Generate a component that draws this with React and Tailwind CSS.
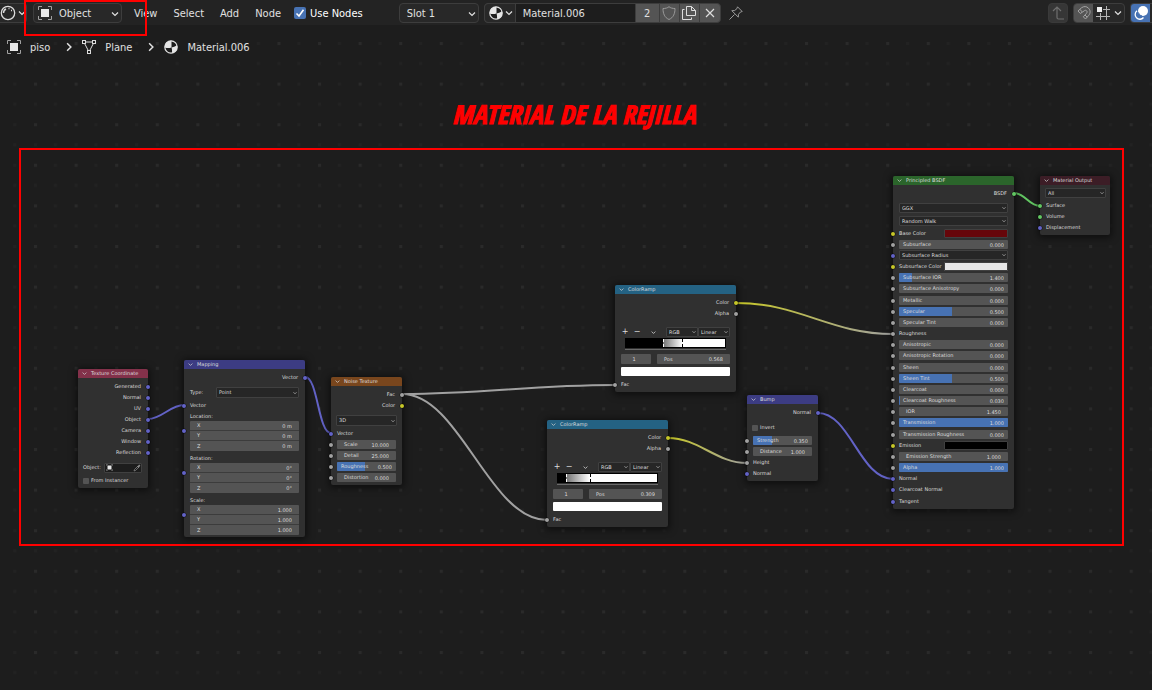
import { useId, useState } from 'react';

const SOCKET = {
    gray: 'bg-[#a1a1a1]',
    yellow: 'bg-[#c7c729]',
    blue: 'bg-[#6363c7]',
    green: 'bg-[#63c763]',
};

/* ---------- icons ---------- */

function Chevron({ className }) {
    return (
        <svg viewBox="0 0 8 8" className={className} fill="none" stroke="currentColor" strokeWidth="1.2">
            <path d="M1 2.5 4 5.5 7 2.5" />
        </svg>
    );
}

function ObjectIcon({ className }) {
    return (
        <svg viewBox="0 0 14 14" className={className} fill="none">
            <path d="M.5 4V.5H4M10 .5h3.500V4M13.500 10v3.500H10M4 13.500H.5V10" stroke="#a0a0a0" />
            <rect x="3" y="3" width="8" height="8" fill="#e8e8e8" />
        </svg>
    );
}

function MaterialIcon({ className }) {
    return (
        <svg viewBox="0 0 14 14" className={className}>
            <circle cx="7" cy="7" r="6.200" fill="#1d1d1d" stroke="#e5e5e5" strokeWidth="1.200" />
            <path d="M7.500 .8A6.200 6.200 0 0 0 .8 7.500C3 8.300 5 8.300 7.500 7.500Z" fill="#e5e5e5" />
            <path d="M7.500 7.500C10 7 12 6 12.900 5A6.200 6.200 0 0 1 8 13.200C8.200 11 8 9 7.500 7.500Z" fill="#e5e5e5" />
        </svg>
    );
}

function SphereIcon({ className }) {
    return (
        <svg viewBox="0 0 16 16" className={className} fill="none" stroke="#dcdcdc">
            <circle cx="8" cy="8" r="6.700" strokeWidth="1.300" />
            <path d="M3.500 8A4.500 4.500 0 0 1 6 4" strokeWidth="1.500" />
            <path d="M8.500 3.500h1M11 5.500h1" strokeWidth="1.300" />
        </svg>
    );
}

function MeshIcon({ className }) {
    return (
        <svg viewBox="0 0 14 14" className={className} fill="none" stroke="#dcdcdc">
            <path d="M3.500 2h7M2.600 3.500 6 10M11.400 3.500 8 10" />
            <rect x=".5" y=".5" width="3" height="3" />
            <rect x="10.500" y=".5" width="3" height="3" />
            <rect x="5.500" y="10.500" width="3" height="3" />
        </svg>
    );
}

function ShieldIcon() {
    return (
        <svg viewBox="0 0 14 14" className="size-3.5" fill="none" stroke="#9a9a9a">
            <path d="M7 .7C5.500 2 3.500 2.500 1 2.500c0 5 1.500 9 6 11 4.500-2 6-6 6-11C10.500 2.500 8.500 2 7 .7Z" />
        </svg>
    );
}

function CopyIcon() {
    return (
        <svg viewBox="0 0 14 14" className="size-3.5" fill="none" stroke="#dedede">
            <path d="M4.500.5h5l4 4v5h-9ZM9.500.5v4h4" />
            <path d="M2.500 3.500h-2v10h9v-2" />
        </svg>
    );
}

function PinIcon() {
    return (
        <svg viewBox="0 0 14 14" className="size-3.5" fill="none" stroke="#9a9a9a">
            <path d="M8.500.8 13.200 5.500 11.500 6 9.500 8.300 9.300 11.200 2.800 4.700 5.700 4.500 8 2.500ZM5.500 8.500.5 13.500" />
        </svg>
    );
}

function ParentIcon() {
    return (
        <svg viewBox="0 0 14 14" className="size-3.5" fill="none" stroke="#6f6f6f" strokeWidth="1.200">
            <path d="M2 5 6 1l4 4M6 1v10.500q0 1.500 1.500 1.500H13" />
        </svg>
    );
}

function MagnetIcon() {
    return (
        <svg viewBox="0 0 14 14" className="size-3.5" fill="none" stroke="#a5a5a5">
            <path d="M1 5 4.500 1.800C7 0 9.500.2 11.500 2.200s2.200 4.800.2 7.200L8.500 13 6.300 10.800 9.300 7.500c1-1.200 1-2 .3-2.700s-1.600-.7-2.600.2L3.300 7.500ZM3 3.300 5 5.800M8 9l2.200 2.200" />
        </svg>
    );
}

function SnapIcon() {
    return (
        <svg viewBox="0 0 14 14" className="size-3.5" fill="none" stroke="#b5b5b5">
            <path d="M10.500 0v14M4.500 7v7M7 3.500h7M0 10.500h14" />
            <rect x="1" y="1" width="5" height="5" fill="#f0f0f0" stroke="none" />
        </svg>
    );
}

function OverlayIcon() {
    return (
        <svg viewBox="0 0 16 16" className="size-4" fill="none">
            <circle cx="10" cy="6" r="5" fill="#fff" />
            <path d="M4 5.800a4.700 4.700 0 1 0 6.500 6.700" stroke="#fff" strokeWidth="1.300" />
            <path d="M5.500 7.500a4 4 0 0 0 3.500 3.500" stroke="#4772b3" />
        </svg>
    );
}

function EyedropperIcon() {
    return (
        <svg viewBox="0 0 8 8" className="size-2" fill="none" stroke="#8f8f8f">
            <path d="M1 7 1.500 5.500 4.500 2.500 5.500 3.500 2.500 6.500ZM4 2l2 2" strokeWidth=".7" />
            <path d="M5.200 2.800 6.800 1.200" strokeWidth="1.700" />
        </svg>
    );
}

/* ---------- node parts ---------- */

function Socket({ color, side = 'left' }) {
    return (
        <span className={`absolute top-1/2 size-1 -translate-y-1/2 rounded-full ring-[0.5px] ring-black/60 ${side === 'left' ? '-left-0.5' : '-right-0.5'} ${SOCKET[color]}`} />
    );
}

function Node({ title, color, position, children }) {
    return (
        <section className={`absolute rounded-[2px] bg-[#303030] shadow-[0_1px_7px_2px_rgba(0,0,0,0.5)] ${position}`}>
            <h2 className={`flex h-[9px] items-center gap-1 rounded-t-[2px] pl-1 ${color}`}>
                <Chevron className="size-[5px] text-[#d0d0d0]" />
                {title}
            </h2>
            <div className="flex flex-col pt-[3px] pb-0.5">{children}</div>
        </section>
    );
}

function Output({ label, color }) {
    return (
        <div className="relative flex h-[11px] items-center justify-end pr-[7px]">
            {label}
            <Socket color={color} side="right" />
        </div>
    );
}

function Input({ label, color }) {
    return (
        <div className="relative flex h-[11px] items-center px-1.5">
            {label}
            <Socket color={color} />
        </div>
    );
}

function Dropdown({ label, options, className = 'h-2.5' }) {
    return (
        <div className={`relative rounded-[1px] border border-[#404040] bg-[#262626] ${className}`}>
            <select aria-label={label} className="block h-full w-full appearance-none bg-transparent pr-1.5 pl-0.5 leading-none outline-0">
                {options.map((o) => <option key={o}>{o}</option>)}
            </select>
            <Chevron className="pointer-events-none absolute top-1/2 right-px size-1 -translate-y-1/2" />
        </div>
    );
}

// number box; fill is the slider percentage, left out for plain numbers
function NumberBox({ label, value, fill, className = 'h-[9px] rounded-[1px]' }) {
    const id = useId();
    const [text, setText] = useState(value);
    return (
        <div className={`relative flex min-w-0 items-center justify-between overflow-hidden bg-[#545454] ${fill === undefined ? 'px-[7px]' : 'px-1'} ${className}`}>
            {fill > 0 && <span className="absolute inset-y-0 left-0 bg-[#4772b3]" style={{ width: `${fill}%` }} />}
            <label htmlFor={id} className="relative whitespace-nowrap">{label}</label>
            <input id={id} value={text} onChange={(e) => setText(e.target.value)} className="relative w-5 bg-transparent text-right outline-0" />
        </div>
    );
}

function NumberRow({ color = 'gray', ...box }) {
    return (
        <div className="relative flex h-[11px] flex-col justify-center px-1.5">
            <NumberBox {...box} />
            <Socket color={color} />
        </div>
    );
}

function ColorRow({ label, swatch }) {
    return (
        <div className="relative flex h-[11px] items-center justify-between px-1.5">
            {label}
            <button aria-label={label} className={`h-[9px] w-16 rounded-[1px] border border-[#404040] ${swatch}`} />
            <Socket color="yellow" />
        </div>
    );
}

function Tick({ label, className }) {
    return (
        <label className={`flex h-[11px] items-center gap-0.5 pl-[5px] whitespace-nowrap ${className}`}>
            <input type="checkbox" className="size-1.5 appearance-none rounded-[1px] bg-[#545454] checked:bg-[#4772b3]" />
            {label}
        </label>
    );
}

function VectorBox({ label, values }) {
    return (
        <>
            <div className="flex h-2.5 items-center px-1.5">{label}:</div>
            <div className="relative mb-0.5 px-1.5 last:mb-0">
                <div className="divide-y divide-[#3c3c3c] overflow-hidden rounded-[1px]">
                    {['X', 'Y', 'Z'].map((axis, i) => (
                        <NumberBox key={axis} label={axis} value={values[i]} className="h-2.5" />
                    ))}
                </div>
                <div className="pointer-events-none absolute inset-x-0 top-0 h-5">
                    <Socket color="blue" />
                </div>
            </div>
        </>
    );
}

function ColorRamp({ position, pos, stops, gradient }) {
    return (
        <Node title="ColorRamp" color="bg-[#246283]" position={position}>
            <Output label="Color" color="yellow" />
            <Output label="Alpha" color="gray" />
            <div className="mt-2 flex h-2.5 items-center justify-between pr-1.5 pl-1">
                <div className="flex items-center">
                    <button aria-label="Add stop" className="w-3 text-[8px]">+</button>
                    <button aria-label="Remove stop" className="w-3 text-[8px]">−</button>
                    <button aria-label="Ramp tools" className="grid w-5 place-items-center">
                        <Chevron className="size-[5px]" />
                    </button>
                </div>
                <div className="flex">
                    <Dropdown label="Color mode" options={['RGB', 'HSV', 'HSL']} className="h-2.5 w-8" />
                    <Dropdown label="Interpolation" options={['Linear', 'Ease', 'Constant']} className="h-2.5 w-8" />
                </div>
            </div>
            <div className="mx-2.5 mt-px border-b border-[#6a6a6a] pb-px">
                <div className={`relative h-2.5 border border-black ${gradient}`}>
                    {stops.map((s, i) => (
                        <span key={s} className={`absolute inset-y-0 border-l border-dashed ${i === 0 ? 'border-white' : 'border-black'}`} style={{ left: `${s}%` }} />
                    ))}
                </div>
            </div>
            <div className="mt-1 flex gap-1.5 px-1.5">
                <input aria-label="Active stop" defaultValue="1" className="h-2.5 w-[30px] rounded-[1px] bg-[#545454] pr-1 text-center outline-0" />
                <NumberBox label="Pos" value={pos} className="h-2.5 flex-1 rounded-[1px]" />
            </div>
            <button aria-label="Stop color" className="mx-1.5 mt-[3px] mb-[3px] h-[9px] rounded-[1px] bg-white" />
            <Input label="Fac" color="gray" />
        </Node>
    );
}

const PRINCIPLED = [
    [
        { label: 'Base Color', swatch: 'bg-[#66060a]' },
        { label: 'Subsurface', value: '0.000', fill: 0 },
        { label: 'Subsurface Radius', menu: true },
        { label: 'Subsurface Color', swatch: 'bg-[#e7e7e7]' },
        { label: 'Subsurface IOR', value: '1.400', fill: 12 },
        { label: 'Subsurface Anisotropy', value: '0.000', fill: 0 },
    ],
    [
        { label: 'Metallic', value: '0.000', fill: 0 },
        { label: 'Specular', value: '0.500', fill: 49 },
        { label: 'Specular Tint', value: '0.000', fill: 0 },
        { label: 'Roughness', socket: 'gray' },
        { label: 'Anisotropic', value: '0.000', fill: 0 },
        { label: 'Anisotropic Rotation', value: '0.000', fill: 0 },
    ],
    [
        { label: 'Sheen', value: '0.000', fill: 0 },
        { label: 'Sheen Tint', value: '0.500', fill: 49 },
        { label: 'Clearcoat', value: '0.000', fill: 0 },
        { label: 'Clearcoat Roughness', value: '0.030', fill: 1 },
        { label: 'IOR', value: '1.450' },
        { label: 'Transmission', value: '1.000', fill: 100 },
    ],
    [
        { label: 'Transmission Roughness', value: '0.000', fill: 0 },
        { label: 'Emission', swatch: 'bg-black' },
        { label: 'Emission Strength', value: '1.000' },
        { label: 'Alpha', value: '1.000', fill: 100 },
        { label: 'Normal', socket: 'blue' },
        { label: 'Clearcoat Normal', socket: 'blue' },
    ],
    [{ label: 'Tangent', socket: 'blue' }],
];

function PrincipledRow({ label, value, fill, swatch, menu, socket }) {
    if (swatch) return <ColorRow label={label} swatch={swatch} />;
    if (socket) return <Input label={label} color={socket} />;
    if (menu) {
        return (
            <div className="relative h-[11px] px-1.5">
                <Dropdown label={label} options={[label]} />
                <Socket color="blue" />
            </div>
        );
    }
    return <NumberRow label={label} value={value} fill={fill} />;
}

/* ---------- canvas ---------- */

function Grid() {
    return (
        <svg className="absolute inset-0 h-full w-full" aria-hidden="true">
            <defs>
                <pattern id="dots" x="34" y="42" width="40.580" height="40.600" patternUnits="userSpaceOnUse">
                    <path d="M20 0h3v3h-3zM0 20h3v3H0zM20 20h3v3h-3z" fill="#222222" />
                    <rect width="3" height="3" fill="#2a2a2a" />
                </pattern>
            </defs>
            <rect width="100%" height="100%" fill="url(#dots)" />
        </svg>
    );
}

function Links() {
    return (
        <svg className="absolute inset-0 h-full w-full" fill="none" strokeWidth="2" aria-hidden="true">
            <defs>
                <linearGradient id="linkA" gradientUnits="userSpaceOnUse" x1="737" y1="0" x2="893" y2="0">
                    <stop stopColor="#c7c729" />
                    <stop offset="1" stopColor="#a1a1a1" />
                </linearGradient>
                <linearGradient id="linkB" gradientUnits="userSpaceOnUse" x1="669" y1="0" x2="747" y2="0">
                    <stop stopColor="#c7c729" />
                    <stop offset="1" stopColor="#a1a1a1" />
                </linearGradient>
            </defs>
            <g stroke="#6363c7">
                <path d="M148 419C162 419 170 405 184 405" />
                <path d="M305 377C318 377 318 433 331 433" />
                <path d="M818 413C850 413 860 479 893 479" />
            </g>
            <g stroke="#a1a1a1">
                <path d="M402 394C485 394 530 385 615 385" />
                <path d="M402 394C460 394 489 520 547 520" />
            </g>
            <path d="M736 303C800 303 830 334 893 334" stroke="url(#linkA)" />
            <path d="M668 438C699 438 716 463 747 463" stroke="url(#linkB)" />
            <path d="M1014 193C1025 193 1029 206 1040 206" stroke="#63c763" />
        </svg>
    );
}

function NodeTree() {
    return (
        <div className="text-[5px] leading-none text-[#dddddd] [font-family:'DejaVu_Sans',sans-serif]">
            <Node title="Texture Coordinate" color="bg-[#83314a]" position="left-[78px] top-[369px] w-[70px]">
                {['Generated', 'Normal', 'UV', 'Object', 'Camera', 'Window', 'Reflection'].map((name) => (
                    <Output key={name} label={name} color="blue" />
                ))}
                <div className="mt-1 flex h-[11px] items-center justify-between pr-1.5 pl-[5px]">
                    Object:
                    <button aria-label="Object" className="flex h-2.5 w-[38px] items-center justify-between rounded-[1px] border border-[#404040] bg-[#1d1d1d] pl-px">
                        <ObjectIcon className="size-[7px]" />
                        <EyedropperIcon />
                    </button>
                </div>
                <Tick label="From Instancer" className="mt-0.5" />
            </Node>

            <Node title="Mapping" color="bg-[#3c3c83]" position="left-[184px] top-[360px] w-[121px]">
                <Output label="Vector" color="blue" />
                <div className="mt-1 flex h-[11px] items-center justify-between px-1.5">
                    Type:
                    <Dropdown label="Type" options={['Point', 'Texture', 'Vector', 'Normal']} className="h-[11px] w-[83px]" />
                </div>
                <div className="mt-0.5">
                    <Input label="Vector" color="blue" />
                </div>
                <VectorBox label="Location" values={['0 m', '0 m', '0 m']} />
                <VectorBox label="Rotation" values={['0°', '0°', '0°']} />
                <VectorBox label="Scale" values={['1.000', '1.000', '1.000']} />
            </Node>

            <Node title="Noise Texture" color="bg-[#79461d]" position="left-[331px] top-[377px] w-[71px]">
                <Output label="Fac" color="gray" />
                <Output label="Color" color="yellow" />
                <div className="mt-1 mb-0.5 px-[5px]">
                    <Dropdown label="Dimensions" options={['3D', '1D', '2D', '4D']} className="h-[11px]" />
                </div>
                <Input label="Vector" color="blue" />
                <NumberRow label="Scale" value="10.000" />
                <NumberRow label="Detail" value="25.000" />
                <NumberRow label="Roughness" value="0.500" fill={48} />
                <NumberRow label="Distortion" value="0.000" />
            </Node>

            <ColorRamp
                position="left-[615px] top-[285px] w-[121px]"
                pos="0.568"
                stops={[37, 57]}
                gradient="bg-[linear-gradient(90deg,#000_37%,#707070_37%,#fff_57%)]"
            />
            <ColorRamp
                position="left-[547px] top-[420px] w-[121px]"
                pos="0.309"
                stops={[8, 32]}
                gradient="bg-[linear-gradient(90deg,#000_8%,#707070_8%,#fff_32%)]"
            />

            <Node title="Bump" color="bg-[#3c3c83]" position="left-[747px] top-[395px] w-[71px]">
                <Output label="Normal" color="blue" />
                <Tick label="Invert" className="mt-1 mb-0.5" />
                <NumberRow label="Strength" value="0.350" fill={33} />
                <NumberRow label="Distance" value="1.000" />
                <Input label="Height" color="gray" />
                <Input label="Normal" color="blue" />
            </Node>

            <Node title="Principled BSDF" color="bg-[#2b652b]" position="left-[893px] top-[176px] w-[121px]">
                <Output label="BSDF" color="green" />
                <div className="mt-1 mb-0.5 flex flex-col gap-[3px] px-1.5">
                    <Dropdown label="Distribution" options={['GGX', 'Multiscatter GGX']} />
                    <Dropdown label="Subsurface method" options={['Random Walk', 'Christensen-Burley']} />
                </div>
                <div className="flex flex-col gap-px">
                    {PRINCIPLED.map((group) => (
                        <div key={group[0].label}>
                            {group.map((row) => <PrincipledRow key={row.label} {...row} />)}
                        </div>
                    ))}
                </div>
            </Node>

            <Node title="Material Output" color="bg-[#3c1d26]" position="left-[1040px] top-[176px] w-[70px]">
                <div className="mb-0.5 pr-1 pl-[5px]">
                    <Dropdown label="Target" options={['All', 'Eevee', 'Cycles']} />
                </div>
                <Input label="Surface" color="green" />
                <Input label="Volume" color="green" />
                <Input label="Displacement" color="blue" />
            </Node>
        </div>
    );
}

/* ---------- editor header ---------- */

function Toolbar() {
    const [useNodes, setUseNodes] = useState(true);
    return (
        <header className="relative flex h-[25px] items-center bg-[#232323] pt-px">
            <button aria-label="Editor type" className="flex h-5 w-[27px] items-center gap-0.5 rounded-r border border-l-0 border-[#3d3d3d] bg-[#282828]">
                <SphereIcon className="size-4" />
                <Chevron className="size-2" />
            </button>
            <div className="relative ml-1.5 h-5 w-[89px] rounded border border-[#3d3d3d] bg-[#282828]">
                <ObjectIcon className="absolute top-0.5 left-1 size-3.5" />
                <select aria-label="Shader type" className="h-full w-full appearance-none bg-transparent pl-[25px] outline-0">
                    <option>Object</option>
                    <option>World</option>
                    <option>Line Style</option>
                </select>
                <Chevron className="pointer-events-none absolute top-1.5 right-0.5 size-2" />
            </div>
            <nav className="ml-3 flex gap-4">
                <button>View</button>
                <button>Select</button>
                <button>Add</button>
                <button>Node</button>
            </nav>
            <label className="ml-[13px] flex items-center gap-1 text-white">
                <span className="relative size-3">
                    <input type="checkbox" checked={useNodes} onChange={(e) => setUseNodes(e.target.checked)} className="peer block size-3 appearance-none rounded-[2px] bg-[#545454] checked:bg-[#4772b3]" />
                    <svg viewBox="0 0 12 12" className="pointer-events-none invisible absolute inset-0 size-3 peer-checked:visible" fill="none" stroke="#fff" strokeWidth="1.600">
                        <path d="M2.500 6.500 5 9 9.500 2.800" />
                    </svg>
                </span>
                Use Nodes
            </label>
            <div className="relative ml-9 h-5 w-20 rounded border border-[#3d3d3d] bg-[#282828]">
                <select aria-label="Slot" className="h-full w-full appearance-none bg-transparent pl-[7px] outline-0">
                    <option>Slot 1</option>
                </select>
                <Chevron className="pointer-events-none absolute top-1.5 right-0.5 size-2" />
            </div>
            <div className="ml-[5px] flex h-5 divide-x divide-[#3d3d3d] overflow-hidden rounded border border-[#3d3d3d] bg-[#545454]">
                <button aria-label="Browse material" className="flex w-[31px] items-center gap-0.5 bg-[#282828] pl-1">
                    <MaterialIcon className="size-3.5" />
                    <Chevron className="size-2" />
                </button>
                <input aria-label="Material name" defaultValue="Material.006" className="w-[120px] bg-[#1d1d1d] pl-[7px] outline-0" />
                <button className="w-6">2</button>
                <button aria-label="Fake user" className="grid w-5 place-items-center"><ShieldIcon /></button>
                <button aria-label="New material" className="grid w-5 place-items-center"><CopyIcon /></button>
                <button aria-label="Unlink" className="grid w-5 place-items-center">
                    <svg viewBox="0 0 10 10" className="size-2.5" stroke="#dedede" strokeWidth="1.200">
                        <path d="M1 1 9 9M9 1 1 9" />
                    </svg>
                </button>
            </div>
            <button aria-label="Pin" className="ml-2"><PinIcon /></button>
            <div className="ml-auto flex h-5 gap-[5px]">
                <button aria-label="Parent node tree" className="grid w-5 place-items-center rounded border border-[#3a3a3a] bg-[#363636]"><ParentIcon /></button>
                <div className="flex w-[52px] overflow-hidden rounded border border-[#3d3d3d] bg-[#282828]">
                    <button aria-label="Snap" className="grid w-[19px] place-items-center bg-[#545454]"><MagnetIcon /></button>
                    <button aria-label="Snap element" className="flex flex-1 items-center justify-center gap-1">
                        <SnapIcon />
                        <Chevron className="size-2" />
                    </button>
                </div>
                <div className="flex w-[22px] overflow-hidden rounded-l border border-r-0 border-[#3d3d3d] bg-[#282828]">
                    <button aria-label="Overlays" className="grid w-[19px] place-items-center bg-[#4772b3]"><OverlayIcon /></button>
                </div>
            </div>
        </header>
    );
}

function Breadcrumbs() {
    return (
        <nav aria-label="Path" className="relative flex h-11 items-center pl-[7px]">
            <a href="#piso" className="flex items-center gap-[9px]"><ObjectIcon className="size-3.5" />piso</a>
            <Chevron className="mr-2 ml-3.5 size-2.5 -rotate-90" />
            <a href="#plane" className="flex items-center gap-[9px]"><MeshIcon className="size-3.5" />Plane</a>
            <Chevron className="mr-2 ml-3.5 size-2.5 -rotate-90" />
            <a href="#material" className="flex items-center gap-[9px]"><MaterialIcon className="size-3.5" />Material.006</a>
        </nav>
    );
}

export default function App() {
    return (
        <main className="relative min-h-screen overflow-hidden bg-[#1d1d1d] text-[11px] leading-none text-[#e0e0e0] [font-family:'DejaVu_Sans_Condensed','DejaVu_Sans',sans-serif]">
            <Grid />
            <Toolbar />
            <Breadcrumbs />
            <Links />
            <NodeTree />

            {/* annotations */}
            <h1 className="absolute top-[101px] left-[452px] text-[26px] leading-none font-bold whitespace-nowrap text-[#ff0000] italic [-webkit-text-stroke:1px_#ff0000] [font-family:'Liberation_Sans_Narrow','Open_Sans_Condensed','Roboto_Condensed','Liberation_Sans',sans-serif]">
                MATERIAL DE LA REJILLA
            </h1>
            <div className="pointer-events-none absolute top-0 left-6 h-9 w-[123px] border-2 border-[#ff0000]" />
            <div className="pointer-events-none absolute top-[148px] left-[19px] h-[398px] w-[1105px] border-2 border-[#ff0000]" />
        </main>
    );
}
